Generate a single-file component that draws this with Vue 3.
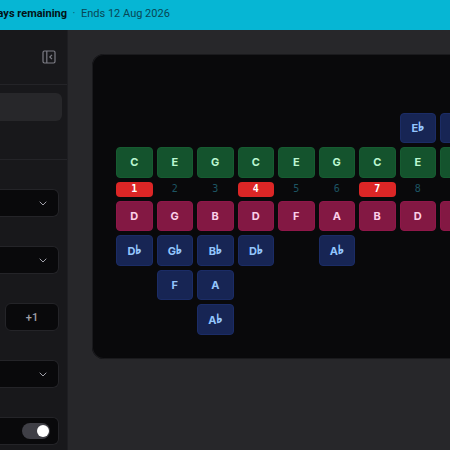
<script setup>
import { ref } from 'vue'

const bends = ref(true)
const holes = [1, 2, 3, 4, 5, 6, 7, 8, 9, 10]
const rootHoles = [1, 4, 7, 10]

// Grid rows: 1-2 blow bends, 3 blow, 4 hole numbers, 5 draw, 6-8 draw bends
const rows = [
  { row: 2, kind: 'bend', notes: ['', '', '', '', '', '', '', 'E♭', 'G♭', 'B'] },
  { row: 3, kind: 'blow', notes: ['C', 'E', 'G', 'C', 'E', 'G', 'C', 'E', 'G', 'C'] },
  { row: 5, kind: 'draw', notes: ['D', 'G', 'B', 'D', 'F', 'A', 'B', 'D', 'F', 'A'] },
  { row: 6, kind: 'bend', notes: ['D♭', 'G♭', 'B♭', 'D♭', '', 'A♭'] },
  { row: 7, kind: 'bend', notes: ['', 'F', 'A'] },
  { row: 8, kind: 'bend', notes: ['', '', 'A♭'] }
]
const cells = rows.flatMap(({ row, kind, notes }) =>
  notes
    .map((note, i) => ({
      id: `${row}-${i}`,
      row,
      col: i + 1,
      kind,
      letter: note.charAt(0),
      accidental: note.slice(1)
    }))
    .filter((cell) => cell.letter)
)
</script>

<template>
  <div class="app">
    <header class="banner">
      <strong class="remaining"><span>ays remaining</span></strong>
      <span class="dot">·</span>
      <span class="ends">Ends 12 Aug 2026</span>
    </header>

    <div class="body">
      <aside class="sidebar">
        <div class="sidebar-head">
          <button class="collapse" type="button" aria-label="Collapse sidebar">
            <svg viewBox="0 0 14 14" width="14" height="14" fill="none" stroke="currentColor" stroke-width="1.2">
              <rect x="1" y="1" width="12" height="12" rx="1.4" />
              <path d="M4.8 1v12M10 4.8 7.8 7l2.2 2.2" />
            </svg>
          </button>
        </div>
        <nav class="nav">
          <a class="nav-item" href="#" aria-label="Current page"></a>
        </nav>
        <form class="controls" @submit.prevent>
          <label class="field">
            <select aria-label="Key"><option></option></select>
            <svg class="chevron" viewBox="0 0 8 5" width="8" height="5"><path d="M.7.7 4 4 7.3.7" /></svg>
          </label>
          <label class="field">
            <select aria-label="Tuning"><option></option></select>
            <svg class="chevron" viewBox="0 0 8 5" width="8" height="5"><path d="M.7.7 4 4 7.3.7" /></svg>
          </label>
          <button class="step" type="button">+1</button>
          <label class="field">
            <select aria-label="Position"><option></option></select>
            <svg class="chevron" viewBox="0 0 8 5" width="8" height="5"><path d="M.7.7 4 4 7.3.7" /></svg>
          </label>
          <label class="field toggle-field">
            <input v-model="bends" class="toggle" type="checkbox" role="switch" aria-label="Show bends" />
          </label>
        </form>
      </aside>

      <main class="main">
        <section class="card">
          <div class="board">
            <div
              v-for="cell in cells"
              :key="cell.id"
              class="note"
              :class="cell.kind"
              :style="{ gridRow: cell.row, gridColumn: cell.col }"
            >{{ cell.letter }}<span v-if="cell.accidental" class="accidental">{{ cell.accidental }}</span></div>
            <div
              v-for="hole in holes"
              :key="hole"
              class="hole"
              :class="{ root: rootHoles.includes(hole) }"
              :style="{ gridColumn: hole }"
            >{{ hole }}</div>
          </div>
        </section>
      </main>
    </div>
  </div>
</template>

<style>
body {
  background: #27272a;
}
</style>

<style scoped>
.app {
  display: flex;
  flex-direction: column;
  height: 100vh;
  overflow: hidden;
  font-family: Inter, "DejaVu Sans", sans-serif;
  font-size: 11px;
  color: #a1a1aa;
}
.app * {
  box-sizing: border-box;
}
.banner {
  display: flex;
  flex: none;
  align-items: center;
  height: 30px;
  padding-bottom: 3px;
  background: #06b6d4;
  font-family: Roboto, Inter, sans-serif;
  white-space: nowrap;
}
.remaining {
  display: flex;
  justify-content: flex-end;
  width: 67px;
  overflow: hidden;
  font-weight: 700;
  color: #031216;
}
.dot {
  width: 14px;
  text-align: center;
  color: #085b6c;
}
.ends {
  color: #084655;
}
.body {
  display: flex;
  flex: 1;
  min-height: 0;
}
.sidebar {
  flex: none;
  width: 68px;
  overflow: hidden;
  background: #18181b;
  border-right: 1px solid #1e1e22;
}
.sidebar-head {
  display: flex;
  align-items: center;
  justify-content: flex-end;
  height: 55px;
  padding-right: 11px;
  border-bottom: 1px solid #242428;
}
.collapse {
  display: flex;
  padding: 0;
  border: 0;
  background: none;
  color: #7c7c85;
}
.nav {
  height: 75px;
  padding: 8px 5px 0 0;
  border-bottom: 1px solid #242428;
}
.nav-item {
  display: block;
  height: 28px;
  border-radius: 0 6px 6px 0;
  background: #27272a;
}
.controls {
  display: flex;
  flex-direction: column;
  gap: 29px;
  padding: 29px 8px 0 0;
}
.field {
  display: flex;
  flex: none;
  align-items: center;
  height: 28px;
  padding-right: 11px;
  border: 1px solid #242428;
  border-left: 0;
  border-radius: 0 6px 6px 0;
  background: #09090b;
}
.field select {
  flex: 1;
  min-width: 0;
  height: 100%;
  padding: 0;
  border: 0;
  appearance: none;
  background: none;
  color: inherit;
}
.chevron {
  fill: none;
  stroke: #a1a1aa;
}
.step {
  flex: none;
  height: 28px;
  margin-left: 5px;
  border: 1px solid #242428;
  border-radius: 6px;
  background: #09090b;
  color: #a1a1aa;
  font: 500 11px Roboto, Inter, sans-serif;
}
.toggle-field {
  justify-content: flex-end;
  padding-right: 8px;
}
.toggle {
  display: flex;
  align-items: center;
  justify-content: flex-end;
  width: 28px;
  height: 16px;
  margin: 0;
  padding: 0 1px;
  border-radius: 8px;
  appearance: none;
  background: #3f3f46;
}
.toggle::before {
  width: 12px;
  height: 12px;
  border-radius: 50%;
  background: #fff;
  content: "";
}
.toggle:not(:checked) {
  justify-content: flex-start;
}
.main {
  flex: 1;
  min-width: 0;
  padding: 24px;
  overflow: hidden;
  background: #27272a;
}
.card {
  width: max-content;
  padding: 24px;
  border-radius: 12px;
  background: #09090b;
  box-shadow: inset 0 0 0 1px #1a1a1d;
}
.board {
  display: grid;
  grid-template-rows: 2fr 2fr 2fr 1fr 2fr 2fr 2fr 2fr;
  grid-template-columns: repeat(10, 1fr);
  gap: 4px;
  width: 401px;
  height: 257px;
}
.note,
.hole {
  display: flex;
  align-items: center;
  justify-content: center;
  min-width: 0;
  min-height: 0;
  border-radius: 4px;
}
.note {
  border: 1px solid;
  font-size: 11px;
  font-weight: 700;
  line-height: 12px;
}
.accidental {
  padding-bottom: 2px;
  font-family: "DejaVu Sans", sans-serif;
  font-size: 12px;
  -webkit-text-stroke: 1px currentColor;
}
.blow {
  border-color: #165c31;
  background: #14532d;
  color: #bbf7d0;
}
.draw {
  border-color: #8f1749;
  background: #831843;
  color: #fbcfe8;
}
.bend {
  border-color: #1b2c66;
  background: #172554;
  color: #93c5fd;
}
.hole {
  grid-row: 4;
  color: #1d5563;
  font-family: "DejaVu Sans Mono", monospace;
  font-size: 10px;
  line-height: 12px;
}
.hole.root {
  background: #dc2626;
  color: #fff;
  font-weight: 700;
}
</style>
